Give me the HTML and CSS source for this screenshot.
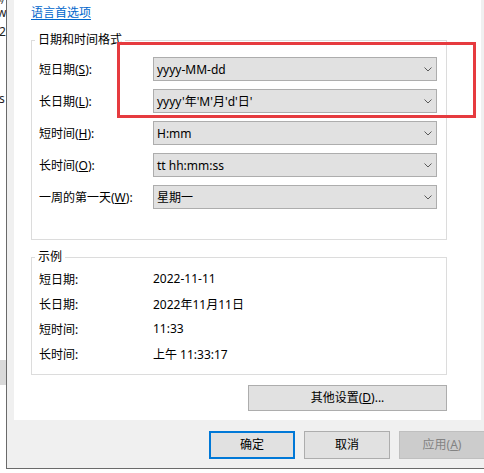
FILE: index.html
```html
<!DOCTYPE html>
<html lang="zh-CN">
<head>
<meta charset="utf-8">
<title>区域格式</title>
<link rel="stylesheet" href="styles.css">
</head>
<body>
<div class="screen">
  <div class="behind">
    <span class="frag frag-a">应</span>
    <span class="frag frag-w">w</span>
    <span class="frag frag-2">2</span>
    <span class="frag frag-s">s</span>
    <span class="behind-block"></span>
  </div>
  <div class="window">
    <div class="panel">
      <a class="link" href="#">语言首选项</a>
      <fieldset class="group group-formats">
        <legend>日期和时间格式</legend>
        <div class="row"><span class="label">短日期(<u>S</u>):</span><div class="select"><span>yyyy-MM-dd</span><svg class="chev" width="8" height="5" viewBox="0 0 8 5"><polyline points="0.5,0.5 4,4 7.5,0.5"/></svg></div></div>
        <div class="row"><span class="label">长日期(<u>L</u>):</span><div class="select"><span>yyyy'年'M'月'd'日'</span><svg class="chev" width="8" height="5" viewBox="0 0 8 5"><polyline points="0.5,0.5 4,4 7.5,0.5"/></svg></div></div>
        <div class="row"><span class="label">短时间(<u>H</u>):</span><div class="select"><span>H:mm</span><svg class="chev" width="8" height="5" viewBox="0 0 8 5"><polyline points="0.5,0.5 4,4 7.5,0.5"/></svg></div></div>
        <div class="row"><span class="label">长时间(<u>O</u>):</span><div class="select"><span>tt hh:mm:ss</span><svg class="chev" width="8" height="5" viewBox="0 0 8 5"><polyline points="0.5,0.5 4,4 7.5,0.5"/></svg></div></div>
        <div class="row"><span class="label">一周的第一天(<u>W</u>):</span><div class="select"><span>星期一</span><svg class="chev" width="8" height="5" viewBox="0 0 8 5"><polyline points="0.5,0.5 4,4 7.5,0.5"/></svg></div></div>
      </fieldset>
      <fieldset class="group group-examples">
        <legend>示例</legend>
        <div class="ex-row"><span class="ex-label">短日期:</span><span>2022-11-11</span></div>
        <div class="ex-row"><span class="ex-label">长日期:</span><span>2022年11月11日</span></div>
        <div class="ex-row"><span class="ex-label">短时间:</span><span>11:33</span></div>
        <div class="ex-row"><span class="ex-label">长时间:</span><span>上午 11:33:17</span></div>
      </fieldset>
      <div class="more-row"><button class="btn btn-more">其他设置(<u>D</u>)...</button></div>
    </div>
    <div class="footer">
      <button class="btn btn-primary">确定</button>
      <button class="btn">取消</button>
      <button class="btn btn-disabled">应用(<u>A</u>)</button>
    </div>
  </div>
</div>
<div class="highlight"></div>
</body>
</html>
```

FILE: styles.css
```css
* { box-sizing: border-box; }

html, body {
  margin: 0;
  padding: 0;
}

body {
  width: 484px;
  height: 473px;
  overflow: hidden;
  position: relative;
  background: #ffffff;
  font-family: "Noto Sans", "Noto Sans CJK SC", sans-serif;
  font-size: 12px;
  color: #000;
}

.screen {
  display: flex;
  width: 484px;
  height: 473px;
  overflow: hidden;
}

/* fragments of the window behind */
.behind {
  flex: none;
  width: 6px;
  height: 473px;
  overflow: hidden;
  display: flex;
  flex-direction: column;
  background: #fff;
}
.frag {
  display: block;
  width: 12px;
  margin-left: -5px;
  font-size: 12px;
  line-height: 10px;
  height: 10px;
  overflow: hidden;
  color: #222;
}
.frag-a { margin-top: -4px; height: 8px; line-height: 8px; font-size: 10px; }
.frag-w { margin-top: 4px; margin-left: -3px; }
.frag-2 { margin-top: 9px; margin-left: -1px; }
.frag-s { margin-top: 57px; margin-left: -1px; }
.behind-block {
  display: block;
  margin-top: 256px;
  width: 6px;
  height: 25px;
  background: #d9d9d9;
}

.window {
  flex: none;
  width: 482px;
  height: 469px;
  border-left: 1px solid #6a6a6a;
  border-bottom: 1px solid #6a6a6a;
  padding: 0 7px;
  background: #f0f0f0;
  display: flex;
  flex-direction: column;
}

.panel {
  height: 420px;
  background: #fff;
  padding: 0 34px 0 17px;
  display: flex;
  flex-direction: column;
  align-items: flex-start;
}

.link {
  display: block;
  margin-top: 5px;
  line-height: 16px;
  color: #0066cc;
  text-decoration: underline;
  text-underline-offset: 2px;
}

.group {
  margin: 0;
  padding: 0;
  width: 416px;
  min-inline-size: 0;
  border: 1px solid #dcdcdc;
}
.group legend {
  margin-left: -4px;
  padding: 0 3px;
  line-height: 16px;
  color: #000;
}

.group-formats {
  margin-top: 11px;
  padding: 9px 9px 30px 7px;
}

.row {
  display: flex;
  align-items: center;
  height: 24px;
}
.row + .row { margin-top: 8px; }

.label {
  width: 114px;
  flex: none;
  white-space: nowrap;
}
u { text-decoration: underline; text-underline-offset: 1px; }

.select {
  width: 284px;
  height: 24px;
  background: #e1e1e1;
  border: 1px solid #adadad;
  display: flex;
  align-items: center;
  justify-content: space-between;
  padding: 0 4px 0 3px;
  white-space: nowrap;
}
.chev {
  flex: none;
  fill: none;
  stroke: #5a5a5a;
  stroke-width: 1;
}

.group-examples {
  margin-top: 9px;
  padding: 1px 9px 8px 7px;
}
.ex-row {
  display: flex;
  align-items: center;
  height: 25px;
  white-space: nowrap;
}
.ex-label {
  width: 114px;
  flex: none;
}

.more-row {
  width: 416px;
  display: flex;
  justify-content: flex-end;
  margin-top: 10px;
}

.btn {
  font-family: inherit;
  font-size: 12px;
  color: #000;
  background: #e1e1e1;
  border: 1px solid #adadad;
  border-radius: 0;
  padding: 0;
  margin: 0;
  line-height: 16px;
}
.btn-more {
  width: 199px;
  height: 26px;
}

.footer {
  height: 48px;
  padding: 11px 0 0 195px;
  display: flex;
  gap: 9px;
}
.footer .btn {
  flex: none;
  width: 86px;
  height: 28px;
}
.btn-primary {
  border: 2px solid #0078d7;
}
.btn-disabled {
  background: #cccccc;
  border-color: #bfbfbf;
  color: #838383;
}

.highlight {
  position: absolute;
  left: 117px;
  top: 42px;
  width: 359px;
  height: 76px;
  border: 3px solid #e63b3f;
  pointer-events: none;
}
```
